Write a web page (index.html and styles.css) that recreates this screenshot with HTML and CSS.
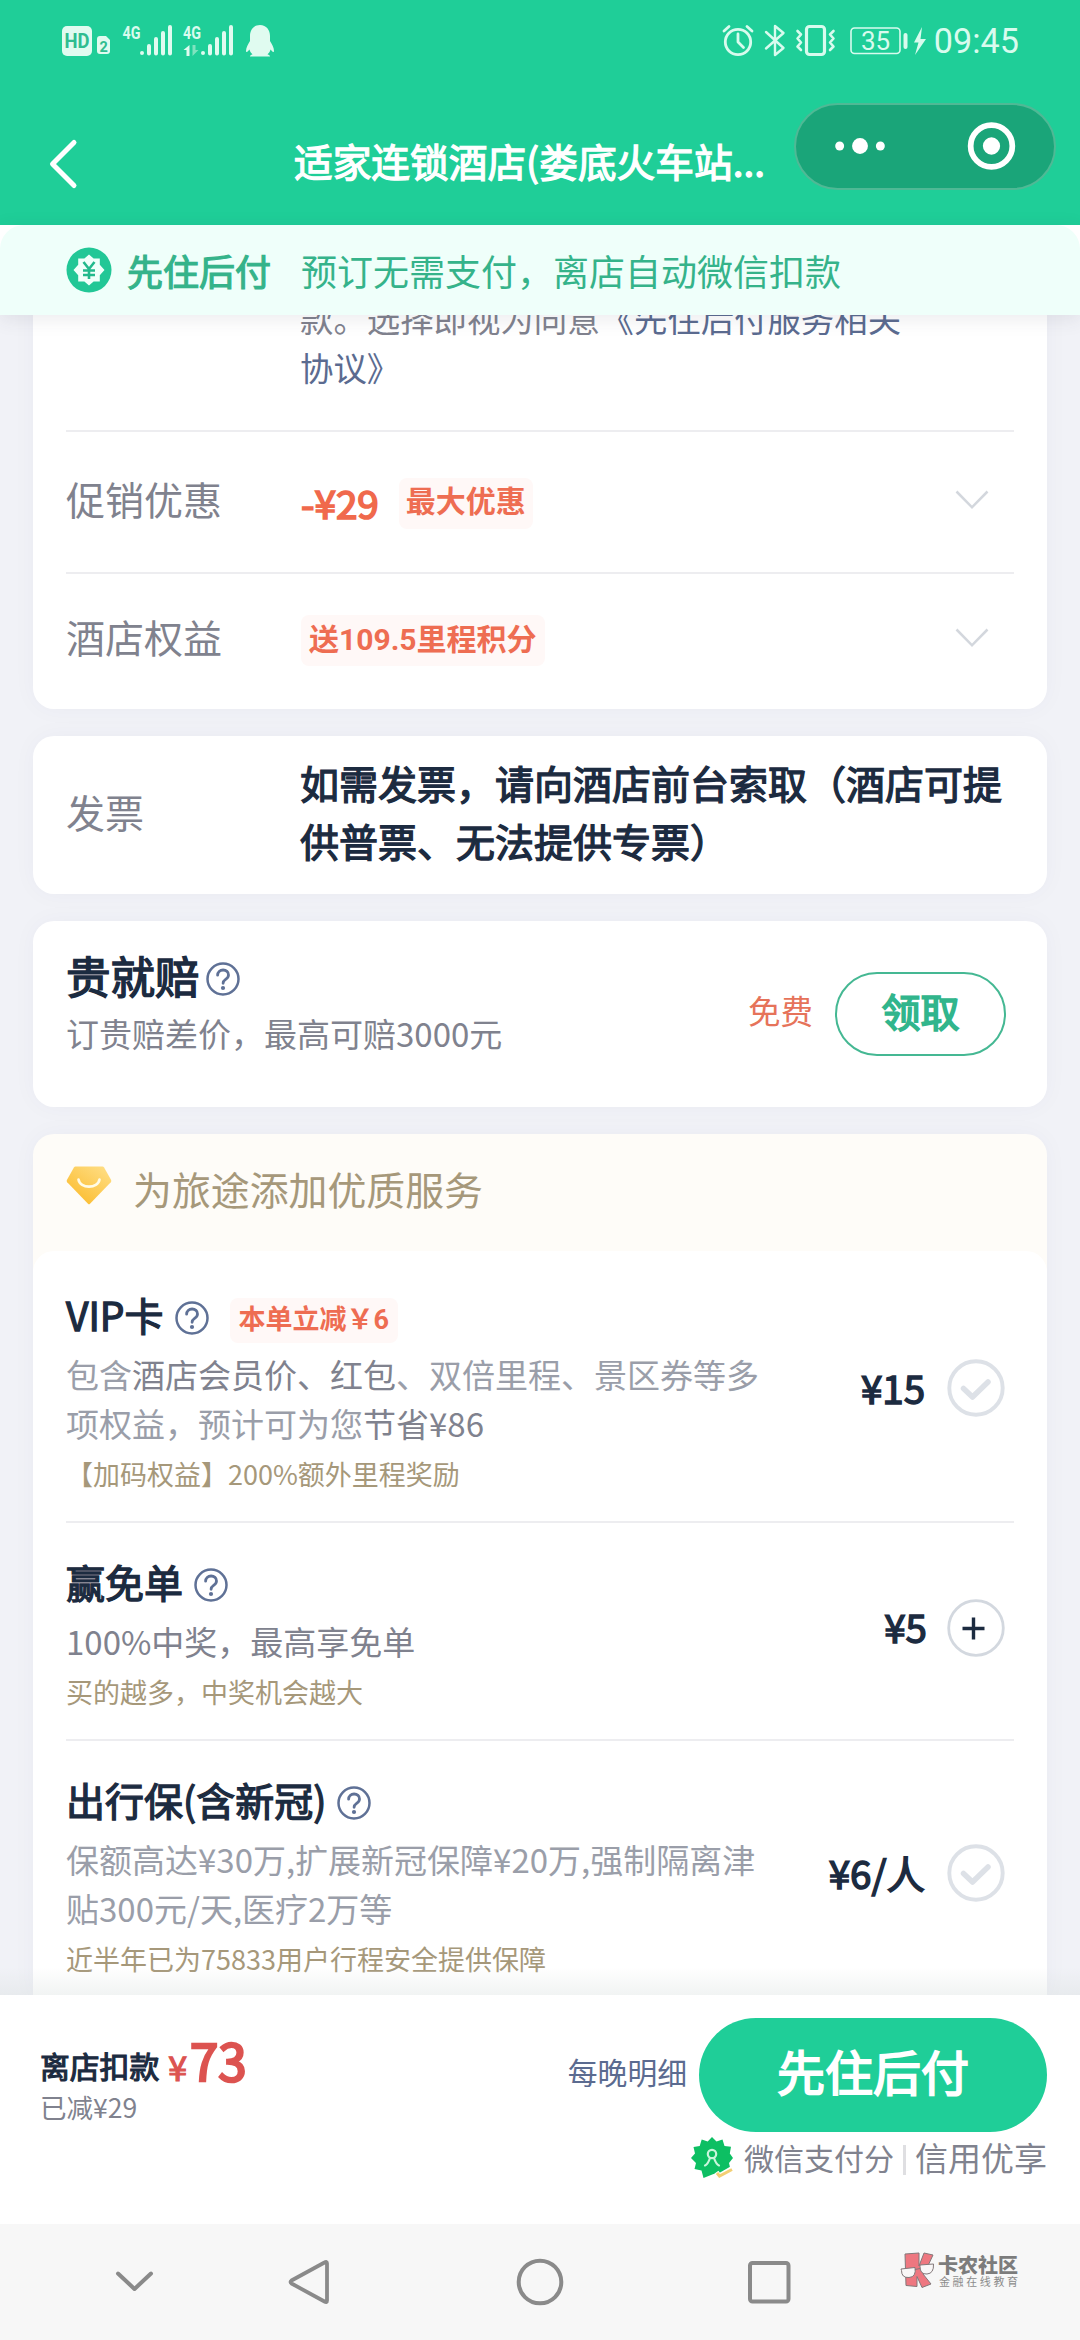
FILE: index.html
```html
<!DOCTYPE html>
<html lang="zh-CN">
<head>
<meta charset="utf-8">
<title>适家连锁酒店</title>
<link rel="stylesheet" href="styles.css">
</head>
<body>
<svg class="defs" width="0" height="0" aria-hidden="true">
  <symbol id="help" viewBox="0 0 34 34">
    <circle cx="17" cy="17" r="15.500" fill="none" stroke="#5f7196" stroke-width="2.500"/>
    <path d="M11.600 13.200c0-3 2.400-5.200 5.500-5.200s5.400 2.100 5.400 4.900c0 2.200-1.300 3.300-2.900 4.400-1.600 1.100-2.500 2-2.500 4" fill="none" stroke="#5f7196" stroke-width="2.800" stroke-linecap="round"/>
    <circle cx="17" cy="26" r="2.100" fill="#5f7196"/>
  </symbol>
  <symbol id="chevron" viewBox="0 0 34 20">
    <path d="M1.500 1.500 17 17.300 32.500 1.500" fill="none" stroke="#d3d7dd" stroke-width="2.500"/>
  </symbol>
  <symbol id="check" viewBox="0 0 58 58">
    <circle cx="29" cy="29" r="26.700" fill="none" stroke="#dde1e7" stroke-width="3.900"/>
    <path d="M16.500 29.500 25.500 38 41 23" fill="none" stroke="#dde1e7" stroke-width="5.500" stroke-linecap="round" stroke-linejoin="round"/>
  </symbol>
</svg>

<div class="screen">
  <header class="top">
    <div class="status">
      <svg class="status-left" width="220" height="40" viewBox="60 20 220 40">
        <rect x="62" y="26" width="30" height="30" rx="5" fill="#e0fbf0"/>
        <text x="64.500" y="48" class="hd" textLength="25" lengthAdjust="spacingAndGlyphs">HD</text>
        <path d="M97 39q0-3 3-3h6l4 4v11q0 3-3 3h-7q-3 0-3-3z" fill="#e0fbf0"/>
        <text x="99.500" y="51.500" class="sim">2</text>
        <text x="122.500" y="39" class="net" textLength="18" lengthAdjust="spacingAndGlyphs">4G</text>
        <g stroke="#e0fbf0" stroke-width="4" stroke-linecap="round">
          <path d="M142 53v0M149 46v7.500M156 39v14.500M163 33v20.500M170 27v26.500"/>
          <path d="M203 53v0M210 46v7.500M217 39v14.500M224 33v20.500M231 27v26.500"/>
        </g>
        <text x="183" y="39" class="net" textLength="18" lengthAdjust="spacingAndGlyphs">4G</text>
        <path d="M189.500 45v11h-3v-6h-3z" fill="#e0fbf0"/>
        <path d="M192.500 45v11l6-6h-3v-5z" fill="#7fe3bf"/>
        <path d="M260 25c-6.500 0-10 5-10 11v5c-2 3-4 7-4 10 0 2 1.500 1 3.500-1.500.5 2 1.500 3.500 3 4.700-1.500.5-2.500 1.300-2.500 2.300h20c0-1-1-1.800-2.500-2.300 1.500-1.200 2.500-2.700 3-4.700 2 2.500 3.500 3.500 3.500 1.500 0-3-2-7-4-10v-5c0-6-3.500-11-10-11z" fill="#e0fbf0"/>
      </svg>
      <div class="status-right">
        <svg width="210" height="40" viewBox="720 20 210 40" fill="none" stroke="#d8fbee" stroke-linecap="round" stroke-linejoin="round">
          <circle cx="738" cy="42" r="12.700" stroke-width="2.800"/>
          <path d="M738 34v8l5.500 5.500" stroke-width="2.800"/>
          <path d="M724 31l5-4.500M752 31l-5-4.500" stroke-width="2.800"/>
          <path d="M766 32l17.500 16-8.500 7V26l8.500 7L766 48.500" stroke-width="2.400"/>
          <rect x="806.500" y="26.500" width="18" height="28" rx="3" stroke-width="3.200"/>
          <path d="M797.500 31l3.500 3.500-3.500 4 3.500 4-3.500 4 3.500 3.500M833.500 31l-3.500 3.500 3.500 4-3.500 4 3.500 4-3.500 3.500" stroke-width="2.600"/>
          <rect x="851" y="28" width="49" height="25.500" rx="3.500" stroke-width="1.600"/>
          <path d="M905.500 35v12" stroke-width="4"/>
          <path d="M922 27l-8 15.500h4.500l-3.500 12.500 11-16h-5.500z" fill="#d8fbee" stroke="none"/>
          <text x="861" y="49.500" class="battery">35</text>
        </svg>
        <span class="clock">09:45</span>
      </div>
    </div>
    <div class="navbar">
      <svg class="back" width="34" height="54" viewBox="0 0 34 54"><path d="M28 5.500 6.500 27 28 48.500" fill="none" stroke="#fff" stroke-width="5" stroke-linecap="round" stroke-linejoin="round"/></svg>
      <h1 class="title">适家连锁酒店(娄底火车站...</h1>
      <div class="capsule">
        <svg width="130" height="52" viewBox="0 0 130 52"><circle cx="44" cy="26" r="4.500" fill="#fff"/><circle cx="64.500" cy="26" r="8" fill="#fff"/><circle cx="85" cy="26" r="4.500" fill="#fff"/></svg>
        <span class="capsule-line"></span>
        <svg width="130" height="52" viewBox="0 0 130 52"><circle cx="67" cy="26" r="21" fill="none" stroke="#fff" stroke-width="5.800"/><circle cx="67" cy="26" r="8.700" fill="#fff"/></svg>
      </div>
    </div>
  </header>

  <div class="banner-wrap">
    <div class="banner">
      <svg class="banner-icon" width="46" height="46" viewBox="0 0 46 46">
        <circle cx="23" cy="23" r="22.500" fill="#22c796"/>
        <path d="M23 7.500l4.600 4h6.200v6.300l4.700 5.200-4.700 5.200v6.300h-6.200l-4.600 4-4.600-4h-6.200v-6.300L7.500 23l4.700-5.200v-6.300h6.200z" fill="#f0fffa"/>
        <path d="M17.500 15l5.500 7 5.500-7M23 22v10M17 23.500h12M17 28h12" fill="none" stroke="#22b98c" stroke-width="2.600"/>
      </svg>
      <strong class="banner-name">先住后付</strong>
      <span class="banner-text">预订无需支付，离店自动微信扣款</span>
    </div>
  </div>

  <main class="content">
    <section class="card card-order">
      <p class="terms">款。选择即视为同意<a>《先住后付服务相关协议》</a></p>
      <div class="row row-promo">
        <span class="label">促销优惠</span>
        <div class="value"><b class="discount">-¥29</b><span class="tag">最大优惠</span></div>
        <svg class="chev" width="34" height="20"><use href="#chevron"/></svg>
      </div>
      <div class="row row-rights">
        <span class="label">酒店权益</span>
        <div class="value"><span class="tag">送109.5里程积分</span></div>
        <svg class="chev" width="34" height="20"><use href="#chevron"/></svg>
      </div>
    </section>

    <section class="card card-invoice">
      <span class="label">发票</span>
      <p class="invoice-text">如需发票，请向酒店前台索取（酒店可提供普票、无法提供专票）</p>
    </section>

    <section class="card card-claim">
      <div class="claim-info">
        <h2 class="claim-title">贵就赔<svg class="help" width="34" height="34"><use href="#help"/></svg></h2>
        <p class="desc dark">订贵赔差价，最高可赔3000元</p>
      </div>
      <span class="free">免费</span>
      <button class="claim-btn">领取</button>
    </section>

    <section class="card card-services">
      <header class="services-head">
        <svg width="46" height="40" viewBox="0 0 46 40">
          <defs><linearGradient id="gold" x1="1" y1="0" x2="0.200" y2="1"><stop offset="0" stop-color="#ffe08a"/><stop offset="1" stop-color="#fbbb2c"/></linearGradient></defs>
          <path d="M9.500 0.500h27q1 0 1.600 1l7 12.500q.6 1.200-.3 2.200L24 37.800q-1 1-2 0L1.200 16.200q-.9-1-.3-2.200L7.900 1.500q.6-1 1.600-1z" fill="url(#gold)"/>
          <path d="M12.500 13.500c1.500 9.500 19.500 9.500 21 0" fill="none" stroke="#fffbe6" stroke-width="2.600" stroke-linecap="round"/>
        </svg>
        <span>为旅途添加优质服务</span>
      </header>
      <div class="services">
        <article class="item item-first">
          <div class="item-info">
            <h3 class="item-title">VIP卡<svg class="help" width="34" height="34"><use href="#help"/></svg><span class="tag tag-small">本单立减￥6</span></h3>
            <p class="desc">包含<em>酒店会员价、红包</em>、双倍里程、景区券等多项权益，预计可为您<em>节省¥86</em></p>
            <p class="note">【加码权益】200%额外里程奖励</p>
          </div>
          <b class="price">¥15</b>
          <svg class="pick" width="58" height="58"><use href="#check"/></svg>
        </article>
        <article class="item item-draw">
          <div class="item-info">
            <h3 class="item-title">赢免单<svg class="help" width="34" height="34"><use href="#help"/></svg></h3>
            <p class="desc dark">100%中奖，最高享免单</p>
            <p class="note">买的越多，中奖机会越大</p>
          </div>
          <b class="price">¥5</b>
          <svg class="pick" width="58" height="58" viewBox="0 0 58 58"><circle cx="29" cy="29" r="27.300" fill="none" stroke="#d3d8df" stroke-width="2.800"/><path d="M15.500 29.500h22M26.500 18.500v22" stroke="#1c2b40" stroke-width="3.400"/></svg>
        </article>
        <article class="item">
          <div class="item-info">
            <h3 class="item-title">出行保(含新冠)<svg class="help" width="34" height="34"><use href="#help"/></svg></h3>
            <p class="desc">保额高达¥30万,扩展新冠保障¥20万,强制隔离津贴300元/天,医疗2万等</p>
            <p class="note">近半年已为75833用户行程安全提供保障</p>
          </div>
          <b class="price">¥6/人</b>
          <svg class="pick" width="58" height="58"><use href="#check"/></svg>
        </article>
      </div>
    </section>
  </main>

  <footer class="paybar">
    <div class="total">
      <p class="total-line"><b class="total-label">离店扣款</b><b class="total-sign">¥</b><b class="total-sum">73</b></p>
      <p class="saved">已减¥29</p>
    </div>
    <div class="actions">
      <div class="action-row"><a class="nightly">每晚明细</a><button class="pay-btn">先住后付</button></div>
      <div class="credit">
        <svg width="42" height="42" viewBox="0 0 42 42">
          <path d="M21 0l4.500 4.500 6-2 2 6.500 6.500.8-1.200 6.700L42 21l-4 5 1.500 6.500-6.500 1-1.500 4.500-9-1-10 4-2-7.500-7-1.500 1.500-6L0 21l4-4.500L2.500 10l6.200-1 2-6.500 6 2z" fill="#0dbf63"/>
          <circle cx="21" cy="17" r="4.200" fill="none" stroke="#c9f6dc" stroke-width="2.200"/>
          <path d="M14 28.500c2.500-.8 3.500-3 5-7.500M28 28.500c-2.500-.8-3.500-3-5-7.500" fill="none" stroke="#c9f6dc" stroke-width="2.200" stroke-linecap="round"/>
          <path d="M25 35.500l3 4 13-7.500" fill="none" stroke="#fff" stroke-width="6"/>
          <path d="M26 36l2.500 3L41 32.500" fill="none" stroke="#f3cf74" stroke-width="3"/>
        </svg>
        <span class="credit-name">微信支付分</span>
        <span class="credit-line"></span>
        <span class="credit-more">信用优享</span>
      </div>
    </div>
  </footer>

  <nav class="sysnav">
    <svg class="nav-hide" width="44" height="30" viewBox="0 0 44 30"><path d="M6 6.500 22.500 22 39 6.500" fill="none" stroke="#8a8a8a" stroke-width="4" stroke-linecap="round" stroke-linejoin="round"/></svg>
    <svg class="nav-back" width="44" height="50" viewBox="0 0 44 50"><path d="M37.500 5.500q2.500-1.500 2.500 1v37q0 2.500-2.500 1L4.500 26.500q-2-1.500 0-3z" fill="none" stroke="#8a8a8a" stroke-width="3.800" stroke-linejoin="round"/></svg>
    <svg class="nav-home" width="48" height="48" viewBox="0 0 48 48"><circle cx="24" cy="24" r="21.300" fill="none" stroke="#8a8a8a" stroke-width="4"/></svg>
    <svg class="nav-recent" width="44" height="44" viewBox="0 0 44 44"><rect x="3" y="3" width="38.500" height="38.500" rx="2.500" fill="none" stroke="#8a8a8a" stroke-width="4"/></svg>
    <div class="brand">
      <svg width="35" height="36" viewBox="0 0 35 36" stroke="#83787a" stroke-width="1" stroke-linejoin="round">
        <path d="M5 2l14-1v13l5-13 9 2-7 15-3 4 8 10-9 3.500-5-11v10l-11-1z" fill="#ee7780"/>
        <path d="M1 17l14-1.500q1.500 9.500-6 10t-7.500-7zM20 13l13.500-1q.5 9.500-6.500 10t-7-7.500z" fill="#f9f7f7"/>
        <path d="M15 17.500l5-1" fill="none"/>
      </svg>
      <div class="brand-text"><b>卡农社区</b><span>金融在线教育</span></div>
    </div>
  </nav>
</div>
</body>
</html>
```
FILE: styles.css
```css
* { box-sizing: border-box; }
body { margin: 0; background: #f1f2f7; font-family: "Noto Sans CJK SC", "Noto Sans", sans-serif; }
h1, h2, h3, p { margin: 0; font-weight: 400; }
b, strong, em { font-weight: 400; font-style: normal; }
svg { display: block; flex: none; }
button { font-family: inherit; padding: 0; background: none; border: 0; }
.defs { position: absolute; }

.screen { width: 1080px; height: 2340px; display: flex; flex-direction: column; overflow: hidden; }

/* header */
.top { height: 225px; background: #1fce98; color: #fff; display: flex; flex-direction: column; flex: none; }
.status { height: 82px; padding: 20px 61px 0 60px; display: flex; justify-content: space-between; align-items: flex-start; }
.status-right { display: flex; align-items: flex-start; gap: 4px; }
.clock { font-family: Roboto, sans-serif; font-size: 34.2px; line-height: 42px; color: #d8fbee; }
.hd { font: bold 20px Roboto, sans-serif; fill: #2fbd90; }
.sim { font: bold 14.5px Roboto, sans-serif; fill: #2fbd90; }
.net { font: bold 18px Roboto, sans-serif; fill: #d8fbee; }
.battery { font: 400 26px Roboto, sans-serif; fill: #d8fbee; stroke: none; }
.navbar { flex: 1; padding: 0 24px 0 46px; display: flex; align-items: center; }
.back { margin-top: 21px; }
.title { margin: 12px 0 0 214px; font-size: 38.7px; line-height: 58px; -webkit-text-stroke: 1.3px #fff; white-space: nowrap; }
.capsule { margin: -15px 0 0 auto; width: 262px; height: 87px; border-radius: 44px; border: 2px solid #4fb995; background: #1aa579; display: flex; align-items: center; }
.capsule-line { width: 1px; height: 52px; background: #4fbd9a; }
.capsule svg { width: 129px; }

/* banner */
.banner-wrap { height: 90px; flex: none; background: #fff; position: relative; z-index: 1; box-shadow: 0 4px 18px rgba(60, 60, 80, .1); }
.banner { height: 90px; padding: 0 0 1px 66px; border-radius: 24px 24px 0 0; background: #effffa; display: flex; align-items: center; font-size: 36px; line-height: 54px; color: #35b38a; }
.banner-name { margin-left: 15px; -webkit-text-stroke: 1.2px #35b38a; }
.banner-text { margin-left: 30px; }

/* cards */
.content { height: 1680px; flex: none; padding: 0 33px; overflow: hidden; display: flex; flex-direction: column; gap: 27px; position: relative; }
.content::after { content: ""; position: absolute; left: 0; right: 0; bottom: 0; height: 28px; background: linear-gradient(rgba(220, 226, 226, 0), rgba(210, 218, 216, .3)); }
.card { flex: none; background: #fff; border-radius: 21px; box-shadow: 0 0 24px rgba(60, 60, 100, .035); padding: 0 33px; }
.label { width: 235px; flex: none; font-size: 39px; line-height: 58px; color: #80828e; }
.card-order { margin-top: -40px; height: 434px; padding-top: 18px; }
.terms { height: 137px; margin-left: 234px; width: 620px; font-size: 33.4px; line-height: 49px; color: #80828e; }
.terms a { color: #5b6b90; }
.row { display: flex; align-items: center; border-top: 2px solid #ededf0; }
.row-promo { height: 142px; padding-bottom: 9px; }
.row-rights { height: 137px; padding-bottom: 12px; }
.value { flex: 1; display: flex; align-items: center; padding-top: 8px; }
.discount { font-size: 38.7px; line-height: 58px; color: #f0694c; -webkit-text-stroke: 1.7px #f0694c; }
.tag { height: 51px; padding: 0 7px; border-radius: 8px; background: #fff8f7; font-family: Roboto, "Noto Sans CJK SC", sans-serif; font-weight: 700; font-size: 30px; line-height: 47px; color: #ee6d52; }
.row-rights .tag { padding: 0 8px; line-height: 49px; margin-top: 1px; }
.discount + .tag { margin: 4px 0 0 20px; }
.chev { margin: 5px 25px 0 0; }
.card-invoice { height: 158px; display: flex; align-items: center; }
.card-invoice .label { width: 234px; padding-bottom: 8px; }
.invoice-text { flex: 1; margin-right: -5px; font-size: 39px; line-height: 58px; color: #1c2b40; -webkit-text-stroke: 1.3px #1c2b40; padding-bottom: 9px; }
.card-claim { height: 186px; display: flex; align-items: flex-start; }
.claim-info { padding-top: 24px; flex: 1; }
.claim-title { display: flex; align-items: center; gap: 6px; font-size: 44.5px; line-height: 60px; margin-bottom: 4px; color: #1c2b40; -webkit-text-stroke: 1.5px #1c2b40; }
.claim-title .help { margin-top: 7px; }
.desc { font-size: 33px; line-height: 49px; color: #9a9ea9; }
.desc.dark, .desc em { color: #80828e; }
.free { flex: none; margin-top: 65px; font-size: 32.5px; line-height: 48px; color: #e6735a; }
.claim-btn { flex: none; margin: 51px 8px 0 22px; width: 171px; height: 84px; border: 2px solid #45b893; border-radius: 42px; font-size: 39px; line-height: 70px; padding-bottom: 9px; color: #31b58c; -webkit-text-stroke: 1.7px #31b58c; }

/* add-on services */
.card-services { padding: 0; background: #fefcf8; }
.services-head { height: 117px; padding: 0 33px 10px; display: flex; align-items: center; gap: 21px; font-size: 38.9px; line-height: 58px; color: #a6987a; }
.services-head svg { margin-top: -4px; }
.services { background: #fff; border-radius: 21px 21px 0 0; padding: 0 33px; }
.item { display: flex; align-items: center; padding: 28px 9px 23px 0; border-top: 2px solid #ededf0; }
.item-first { padding-top: 33px; border-top: 0; }
.item-info { flex: none; width: 700px; }
.item-title { height: 60px; margin-bottom: 6px; display: flex; align-items: center; font-size: 39px; line-height: 60px; color: #1c2b40; -webkit-text-stroke: 1.3px #1c2b40; }
.item-title .help { margin: 8px 0 0 11px; }
.tag-small { height: 45px; margin: 12px 0 0 21px; padding: 0 9px; font-size: 27px; line-height: 45px; -webkit-text-stroke: 0; }
.note { font-size: 27px; line-height: 50px; padding-top: 1px; margin-bottom: -1px; color: #a6987a; }
.price { margin: 0 0 8px auto; white-space: nowrap; font-size: 38.5px; line-height: 58px; color: #1c2b40; -webkit-text-stroke: 1.5px #1c2b40; }
.pick { margin: 0 0 6px 22px; }
.item-draw .price { margin-bottom: 16px; }
.item-draw .pick { margin: 0 0 11px 20px; }

/* payment bar */
.paybar { height: 229px; flex: none; background: #fff; padding: 0 33px 0 40px; display: flex; justify-content: space-between; align-items: flex-start; position: relative; }
.total { padding-top: 34px; }
.total-line { display: flex; align-items: baseline; height: 60px; line-height: 60px; }
.total-label { padding-bottom: 3px; margin-top: -3px; position: relative; top: -3px; font-size: 29.8px; color: #1c2b40; -webkit-text-stroke: 1.2px #1c2b40; }
.total-sign { margin-left: 9px; font-size: 34px; color: #dc5350; -webkit-text-stroke: 1.2px #dc5350; }
.total-sum { margin-left: 3px; font-size: 51px; color: #dc5350; -webkit-text-stroke: 2.5px #dc5350; }
.saved { font-size: 26.5px; line-height: 36px; color: #80828e; }
.actions { padding-top: 23px; }
.action-row { display: flex; justify-content: flex-end; align-items: center; gap: 12px; }
.nightly { font-size: 29.8px; line-height: 44px; padding-bottom: 8px; color: #5b6b90; }
.pay-btn { width: 348px; height: 114px; border-radius: 57px; background: #1fce98; color: #fff; font-size: 48px; line-height: 100px; padding-bottom: 11px; -webkit-text-stroke: 1.8px #fff; }
.credit { height: 52px; display: flex; align-items: center; justify-content: flex-end; color: #80828e; white-space: nowrap; }
.credit-name { margin-left: 11px; font-size: 30px; line-height: 48px; padding-bottom: 2px; }
.credit-line { width: 3px; height: 30px; margin: 4px 9px 0 9px; background: #dfdfe2; }
.credit-more { font-size: 33px; line-height: 48px; padding-bottom: 2px; }

/* system navigation */
.sysnav { height: 116px; flex: none; background: #f7f7f7; display: flex; align-items: center; padding-left: 112px; }
.nav-back { margin-left: 131px; }
.nav-home { margin-left: 185px; }
.nav-recent { margin-left: 183px; }
.brand { margin: -24px 0 0 109px; display: flex; gap: 3px; align-items: center; }
.brand-text { display: flex; flex-direction: column; white-space: nowrap; color: #7c7c7c; }
.brand-text b { font-size: 20px; line-height: 21px; font-weight: 900; }
.brand-text span { font-size: 11px; line-height: 12px; letter-spacing: 2.6px; color: #8c8c8c; padding-left: 1px; }
```
